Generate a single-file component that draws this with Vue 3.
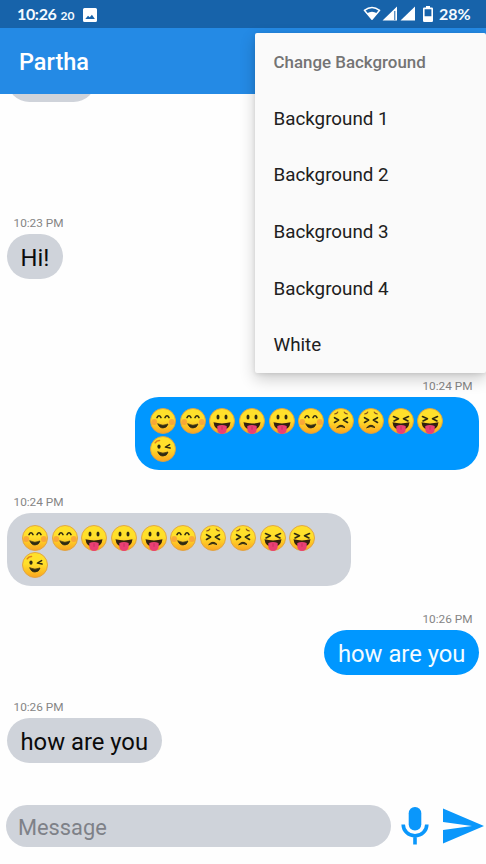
<script setup>
import { ref } from 'vue'

const menuItems = ['Background 1', 'Background 2', 'Background 3', 'Background 4', 'White']

const faces = ['smile', 'smile', 'tongue', 'tongue', 'tongue', 'smile', 'sad', 'sad', 'squint', 'squint', 'wink']

const messages = [
  { id: 1, side: 'left', kind: 'clipped' },
  { id: 2, side: 'left', kind: 'first', time: '10:23 PM', text: 'Hi!' },
  { id: 3, side: 'right', kind: 'spaced', time: '10:24 PM', faces },
  { id: 4, side: 'left', time: '10:24 PM', faces },
  { id: 5, side: 'right', time: '10:26 PM', text: 'how are you' },
  { id: 6, side: 'left', time: '10:26 PM', text: 'how are you' },
]

const draft = ref('')
</script>

<template>
  <div class="phone">
    <header class="status">
      <span class="clock">10:26</span>
      <span class="secs">20</span>
      <svg class="photo" viewBox="0 0 14 14">
        <path fill="#fff" fill-rule="evenodd" d="M1.500 0h11A1.500 1.500 0 0 1 14 1.500v11a1.500 1.500 0 0 1-1.500 1.500h-11A1.500 1.500 0 0 1 0 12.500v-11A1.500 1.500 0 0 1 1.500 0zM2.300 11h9.600L8.900 6.800 6.800 9.300 5 7.700z" />
      </svg>
      <span class="grow"></span>
      <svg class="signals" viewBox="0 0 53 18">
        <path d="M1.400 5.300Q9-.5 16.600 5.300L9 14.200z" fill="none" stroke="#fff" stroke-width="1.500" stroke-linejoin="round" />
        <path d="M4 8.200Q9 5.200 14 8.200L9 14.200z" fill="#fff" />
        <path d="M19.500 15.500 34 1.500v14zM31.300 6v9h1V6z" fill="#fff" fill-rule="evenodd" />
        <path d="M37.500 15.500 52 1.500v14z" fill="#fff" />
      </svg>
      <svg class="battery" viewBox="0 0 10 16">
        <path fill="#fff" fill-rule="evenodd" d="M3 0h4v1.600h1.800Q10 1.600 10 2.800v11.900Q10 16 8.800 16H1.200Q0 16 0 14.700V2.800Q0 1.600 1.200 1.600H3zM1.600 3.300v7h6.800v-7z" />
      </svg>
      <span class="percent">28%</span>
    </header>

    <div class="appbar"><h1>Partha</h1></div>

    <main class="chat">
      <div v-for="m in messages" :key="m.id" class="message" :class="[m.side, m.kind]">
        <time v-if="m.time">{{ m.time }}</time>
        <div class="bubble" :class="{ emoji: m.faces }">
          <template v-if="m.faces">
            <svg v-for="(f, i) in m.faces" :key="i" class="face" viewBox="0 0 26 26">
              <defs>
                <linearGradient :id="`skin${m.id}-${i}`" x1="0" y1="0" x2="0" y2="1">
                  <stop offset="0.450" stop-color="#ffe02b" />
                  <stop offset="1" stop-color="#fba51f" />
                </linearGradient>
              </defs>
              <circle cx="13" cy="13" r="12.500" :fill="`url(#skin${m.id}-${i})`" stroke="#e0a040" stroke-width="0.900" />
              <g v-if="f === 'smile'" fill="none" stroke="#2f2a12" stroke-width="1.600" stroke-linecap="round">
                <circle cx="4.200" cy="14" r="2.900" fill="#f7913d" opacity="0.650" stroke="none" />
                <circle cx="21.800" cy="14" r="2.900" fill="#f7913d" opacity="0.650" stroke="none" />
                <path d="M7 9.600q2-3.800 4 0M15 9.600q2-3.800 4 0" />
                <path d="M8 16q5 2.600 10 0-1.200 4-5 4t-5-4z" fill="#2f2a12" stroke-width="0.700" stroke-linejoin="round" />
              </g>
              <g v-else-if="f === 'tongue' || f === 'squint'">
                <g v-if="f === 'tongue'" fill="#2f2a12">
                  <ellipse cx="9" cy="9" rx="1.500" ry="2.500" />
                  <ellipse cx="17" cy="9" rx="1.500" ry="2.500" />
                </g>
                <path v-else d="M5.500 8.500 10.500 10.700 6 13M20.500 8.500l-5 2.200L20 13" fill="none" stroke="#2f2a12" stroke-width="1.600" stroke-linecap="round" stroke-linejoin="round" />
                <path d="M4.500 14.300q8.500 2.300 17 0-.8 7.700-8.500 7.700t-8.500-7.700z" fill="#32200f" />
                <path d="M8.300 18q4.700-1.800 9.400 0v3.700a4.700 4.200 0 0 1-9.400 0z" fill="#ea4074" />
                <path d="M13 18.300v3.500" stroke="#bd285d" stroke-width="0.700" />
              </g>
              <g v-else-if="f === 'sad'" fill="none" stroke="#2f2a12" stroke-width="1.600" stroke-linecap="round" stroke-linejoin="round">
                <path d="M6.800 5.900q2.300-.1 3-1.900M19.200 5.900q-2.300-.1-3-1.900" stroke="#8d571b" stroke-width="1.100" />
                <path d="M6.500 9.700 10.600 12l-4.100 2.500M19.500 9.700 15.400 12l4.100 2.500" />
                <path d="M9 19.500q4-4.600 8 0-4-2.100-8 0z" fill="#2f2a12" stroke-width="1" />
              </g>
              <g v-else fill="none" stroke="#2f2a12" stroke-width="1.500" stroke-linecap="round" stroke-linejoin="round">
                <path d="M5.200 6.800q1.500-2.500 4.300-2.300" stroke="#e17d19" />
                <ellipse cx="9" cy="10.600" rx="1.600" ry="2.200" fill="#2f2a12" stroke="none" />
                <path d="M19.600 8.600 15.400 11.100l4.700 1" />
                <path d="M8 16q5 2.400 10 0-1 4-5 4t-5-4z" fill="#2f2a12" stroke-width="0.800" />
              </g>
            </svg>
          </template>
          <template v-else>{{ m.text }}</template>
        </div>
      </div>
    </main>

    <footer class="composer">
      <input v-model="draft" type="text" placeholder="Message" />
      <svg class="mic" viewBox="0 0 28 38" fill="none" stroke="#0a97fb">
        <rect x="7.700" y="0" width="12.600" height="23.500" rx="6.200" fill="#0a97fb" stroke="none" />
        <path d="M2.200 17.500a11.800 11.300 0 0 0 23.600 0M14 29v8.500" stroke-width="3.600" />
      </svg>
      <svg class="send" viewBox="0 0 42 36">
        <path fill="#0a97fb" d="M0 0.500 41 18 0 35.500V22l29-4L0 14z" />
      </svg>
    </footer>

    <nav class="menu">
      <div class="heading">Change Background</div>
      <div v-for="item in menuItems" :key="item" class="item">{{ item }}</div>
    </nav>
  </div>
</template>

<style>
body {
  margin: 0;
  overflow: hidden;
}
</style>

<style scoped>
.phone {
  position: relative;
  display: flex;
  flex-direction: column;
  width: 486px;
  height: 864px;
  overflow: hidden;
  background: #fefefe;
  font-family: Roboto, sans-serif;
}
.status {
  display: flex;
  align-items: center;
  box-sizing: border-box;
  flex: 0 0 28px;
  padding: 0 14px 0 17px;
  background: #1763aa;
  color: #f4faff;
  font-family: Lato, sans-serif;
  font-weight: 700;
}
.clock,
.percent {
  width: 39.500px;
  font-size: 16px;
  letter-spacing: -0.350px;
  line-height: 28px;
  white-space: nowrap;
}
.percent {
  width: 33px;
  letter-spacing: 0;
}
.secs {
  width: 14px;
  margin: 2px 0 0 4px;
  font-size: 12px;
}
.photo {
  width: 14px;
  height: 14px;
  margin: 1px 0 0 8.500px;
}
.grow {
  flex: 1;
}
.signals {
  width: 53px;
  height: 18px;
}
.battery {
  width: 10px;
  height: 16px;
  margin: 0 6.500px 0 6.500px;
}
.appbar {
  display: flex;
  align-items: center;
  box-sizing: border-box;
  flex: 0 0 66.400px;
  padding: 2px 0 0 19px;
  background: #248ae5;
  color: #fff;
}
.appbar h1 {
  margin: 0;
  font-size: 23.500px;
  font-weight: 500;
}
.chat {
  display: flex;
  flex: 1;
  flex-direction: column;
  justify-content: flex-end;
  gap: 24.500px;
  padding: 0 7px 42px;
  overflow: hidden;
}
.message {
  display: flex;
  flex: none;
  flex-direction: column;
  align-items: flex-start;
}
.message.right {
  align-items: flex-end;
}
.message.first {
  margin-top: 88.500px;
}
.message.spaced {
  margin-top: 74px;
}
time {
  margin: 0 6.500px 2.500px;
  color: #858585;
  font-size: 11.800px;
  line-height: 16.500px;
}
.bubble {
  box-sizing: border-box;
  height: 45px;
  padding: 1px 13.500px 0;
  border-radius: 23px;
  background: #cfd3da;
  color: #0b0b0b;
  font-size: 23.800px;
  line-height: 46px;
  white-space: nowrap;
}
.right .bubble {
  background: #0097ff;
  color: #f3fbff;
}
.clipped .bubble {
  width: 89px;
}
.bubble.emoji {
  display: flex;
  flex-wrap: wrap;
  align-content: flex-start;
  gap: 1.500px 3.700px;
  width: 344px;
  height: 73px;
  padding: 11.500px 15px 0;
  border-radius: 24px;
}
.face {
  width: 26px;
  height: 26px;
}
.composer {
  display: flex;
  align-items: center;
  box-sizing: border-box;
  flex: 0 0 59px;
  padding: 0 1px 17.500px 6px;
}
.composer input {
  box-sizing: border-box;
  flex: none;
  width: 385px;
  height: 41.500px;
  padding: 3px 12px 0;
  border: 0;
  border-radius: 21px;
  outline: 0;
  background: #cfd3da;
  color: #111;
  font: 21.800px Roboto, sans-serif;
}
.composer input::placeholder {
  color: #7e8188;
  opacity: 1;
}
.mic {
  flex: none;
  width: 28px;
  height: 38px;
  margin-left: 10px;
}
.send {
  flex: none;
  width: 42px;
  height: 36px;
  margin: 1px 0 0 13.500px;
}
.menu {
  position: absolute;
  top: 33px;
  right: 0;
  box-sizing: border-box;
  width: 231.500px;
  height: 340px;
  padding-left: 19px;
  border-radius: 2px;
  background: #fafafa;
  box-shadow: 0 6px 16px rgba(0, 0, 0, 0.200), 0 1px 4px rgba(0, 0, 0, 0.100);
  color: #202020;
  font-size: 18.800px;
}
.item {
  height: 56.700px;
  line-height: 59.500px;
}
.heading {
  height: 56.700px;
  color: #747474;
  font-size: 16.900px;
  font-weight: 500;
  line-height: 59px;
}
</style>
